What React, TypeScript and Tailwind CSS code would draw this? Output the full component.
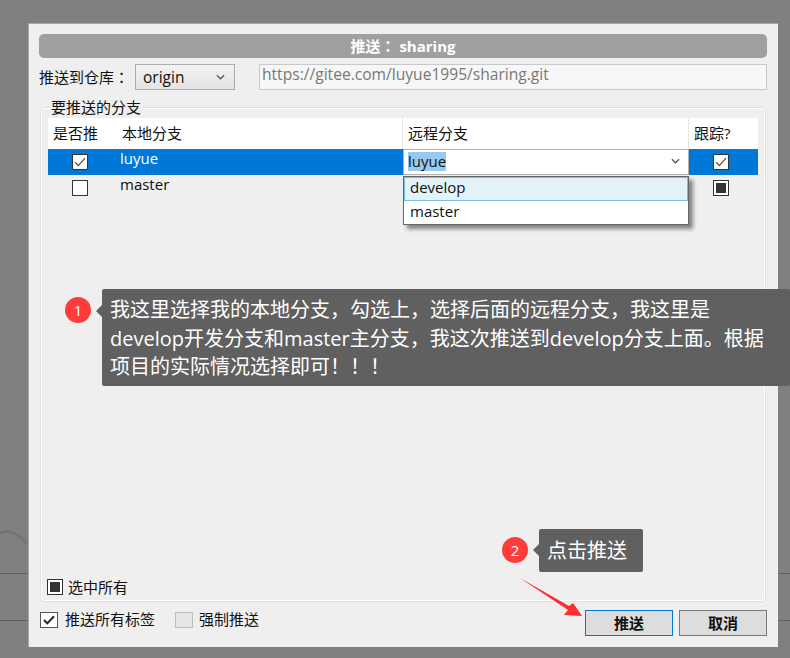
import React from "react";

const FONT = "font-['Open_Sans','Noto_Sans_CJK_SC',sans-serif]";
const COLON = "font-['Noto_Sans_CJK_TC',sans-serif]";

function Check({ className = "" }: { className?: string }) {
  return (
    <svg viewBox="0 0 12 10" className={className} fill="none" stroke="#4a4a4a" strokeWidth="1.2">
      <path d="M1 5.2 L4.3 8.6 L11 1.2" />
    </svg>
  );
}

function Box({ state }: { state: "on" | "off" | "mixed" }) {
  return (
    <div className="flex h-4 w-4 items-center justify-center border border-[#333333] bg-white">
      {state === "on" && <Check className="h-[10px] w-3" />}
      {state === "mixed" && <div className="h-[10px] w-[10px] bg-[#333333]" />}
    </div>
  );
}

function Chevron() {
  return (
    <svg viewBox="0 0 10 6" className="h-[6px] w-[9px]" fill="none" stroke="#555555" strokeWidth="1.4">
      <path d="M1 1 L5 5 L9 1" />
    </svg>
  );
}

function Badge({ n }: { n: string }) {
  return (
    <div className="flex h-[26px] w-[26px] shrink-0 items-center justify-center rounded-full bg-[#ff3b3b] text-[15px] text-white">
      {n}
    </div>
  );
}

export default function App() {
  return (
    <div className={`relative h-[658px] w-[790px] overflow-hidden bg-[#808080] pl-[28px] pt-[23px] text-[15px] leading-[20px] text-[#111111] ${FONT}`}>
      {/* dimmed window lines behind the dialog */}
      <div className="absolute left-0 top-[573px] h-px w-[28px] bg-[#606060]" />
      <div className="absolute left-0 top-[620px] h-px w-[28px] bg-[#606060]" />
      <div className="absolute right-0 top-[573px] h-px w-[12px] bg-[#606060]" />
      <div className="absolute right-0 top-[620px] h-px w-[12px] bg-[#606060]" />
      <svg className="absolute left-0 top-[525px] h-[40px] w-[28px]" viewBox="0 0 28 40" fill="none" stroke="#747474" strokeWidth="3">
        <path d="M0 8 Q13 2 27 19" />
      </svg>

      <div className="flex h-[624px] w-[750px] flex-col border-l border-t border-[#a8a8a8] bg-[#efefef] pl-[10px] pr-[11px] pt-[10px]">
        {/* title */}
        <div className="flex h-[24px] w-[728px] items-center justify-center whitespace-pre rounded-[5px] bg-[#a0a0a0] text-[15px] font-bold text-white">
          推送<span className={COLON}>：</span> sharing
        </div>

        {/* remote row */}
        <div className="mt-[6px] flex h-[26px] items-center">
          <div className="w-[96px]">推送到仓库<span className={COLON}>：</span></div>
          <div className="flex h-[26px] w-[100px] items-center justify-between border border-[#adadad] bg-gradient-to-b from-[#f2f2f2] to-[#e4e4e4] pl-[7px] pr-[9px] text-[15.5px]">
            <span>origin</span>
            <Chevron />
          </div>
          <div className="ml-[24px] flex h-[26px] w-[508px] items-start border border-[#c8c8c8] bg-[#f7f7f7] pl-[2px] text-[15.6px] leading-[19px] text-[#777777]">
            https://gitee.com/luyue1995/sharing.git
          </div>
        </div>

        {/* group box */}
        <div className="relative ml-px mt-[17px] flex h-[495px] w-[726px] flex-col rounded-[4px] border border-[#d9e3ea] pl-[7px] pr-[7px] pt-[10px] shadow-[inset_0_0_0_1px_#ffffff]">
          <div className="absolute left-[9px] top-[-11px] bg-[#efefef] px-px">要推送的分支</div>

          {/* header */}
          <div className="flex h-[31px] w-[710px] bg-white">
            <div className="flex w-[355px] items-center border-r border-[#e5e5e5] pb-px pl-[5px]">
              <span className="w-[69px]">是否推</span>
              <span>本地分支</span>
            </div>
            <div className="flex w-[286px] items-center border-r border-[#e5e5e5] pb-px pl-[5px]">远程分支</div>
            <div className="flex w-[69px] items-center pb-px pl-[5px]">跟踪?</div>
          </div>

          {/* row 1 */}
          <div className="flex h-[26px] w-[710px] bg-[#0078d7]">
            <div className="flex w-[355px] items-center">
              <div className="flex w-[64px] justify-center"><Box state="on" /></div>
              <span className="ml-[8px] -mt-[8px] text-white">luyue</span>
            </div>
            <div className="flex w-[286px] items-center justify-between border border-[#b0b0b0] bg-white pb-[2px] pl-[4px] pr-[8px]">
              <span className="bg-[#99c9ef] leading-[19px]">luyue</span>
              <Chevron />
            </div>
            <div className="flex w-[69px] items-center justify-center pr-[6px]"><Box state="on" /></div>
          </div>

          {/* row 2 */}
          <div className="relative flex h-[26px] w-[710px]">
            <div className="flex w-[355px] items-center">
              <div className="flex w-[64px] justify-center"><Box state="off" /></div>
              <span className="ml-[8px] -mt-[8px]">master</span>
            </div>
            <div className="w-[286px]" />
            <div className="flex w-[69px] items-center justify-center pr-[6px]"><Box state="mixed" /></div>

            {/* dropdown popup */}
            <div className="absolute left-[355px] top-px h-[49px] w-[286px] border border-[#666666] bg-white shadow-[4px_4px_4px_rgba(0,0,0,0.45)]">
              <div className="flex h-[24px] items-center border border-[#77bde4] bg-[#e4f2f9] pb-[5px] pl-[5px]">develop</div>
              <div className="flex h-[24px] items-center pb-[5px] pl-[6px]">master</div>
            </div>
          </div>

          {/* select all */}
          <div className="-ml-px mb-[4px] mt-auto flex items-center">
            <Box state="mixed" />
            <span className="ml-[5px]">选中所有</span>
          </div>
        </div>

        {/* footer */}
        <div className="ml-px mt-[8px] flex items-start">
          <div className="flex items-center">
            <div className="flex h-[16px] w-[18px] items-center justify-center border border-[#555555] bg-white">
              <svg viewBox="0 0 12 10" className="h-[10px] w-3" fill="none" stroke="#222222" strokeWidth="2"><path d="M1 5 L4.3 8.4 L11 1.2" /></svg>
            </div>
            <span className="ml-[7px] -translate-y-px">推送所有标签</span>
          </div>
          <div className="ml-[20px] flex items-center">
            <div className="h-[16px] w-[18px] border border-[#bdbdbd] bg-[#e6e6e6]" />
            <span className="ml-[6px] -translate-y-px">强制推送</span>
          </div>
          <div className="ml-auto flex gap-[6px]">
            <button className="h-[26px] w-[88px] border border-[#0078d7] bg-[#dddddd] font-bold">推送</button>
            <button className="h-[26px] w-[88px] border border-[#7a7a7a] bg-[#dddddd] font-bold">取消</button>
          </div>
        </div>
      </div>

      {/* annotation 1 */}
      <div className="absolute left-[65px] top-[289px] flex items-start">
        <div className="mt-[8px]"><Badge n="1" /></div>
        <div className="relative ml-[11px] h-[97px] w-[688px] whitespace-nowrap rounded-[2px] bg-[#606060] pl-[8px] pt-[7px] text-[20px] leading-[28.5px] text-white">
          <div className="absolute left-[-6px] top-[16px] h-0 w-0 border-y-[6px] border-r-[6px] border-y-transparent border-r-[#606060]" />
          我这里选择我的本地分支，勾选上，选择后面的远程分支，我这里是<br />
          develop开发分支和master主分支，我这次推送到develop分支上面。根据<br />
          项目的实际情况选择即可！！！
        </div>
      </div>

      {/* annotation 2 */}
      <div className="absolute left-[502px] top-[529px] flex items-start">
        <div className="mt-[8px]"><Badge n="2" /></div>
        <div className="relative ml-[11px] flex h-[43px] w-[104px] items-center rounded-[2px] bg-[#606060] pl-[8px] text-[20px] text-white">
          <div className="absolute left-[-6px] top-[15px] h-0 w-0 border-y-[6px] border-r-[6px] border-y-transparent border-r-[#606060]" />
          点击推送
        </div>
      </div>

      {/* red arrow */}
      <svg className="absolute left-[515px] top-[575px] h-[50px] w-[72px]" viewBox="0 0 72 50">
        <path d="M5 3 L54 31 L58 28 L67 41 L49 40 L53 35 Z" fill="#ff2d2d" />
      </svg>
    </div>
  );
}
